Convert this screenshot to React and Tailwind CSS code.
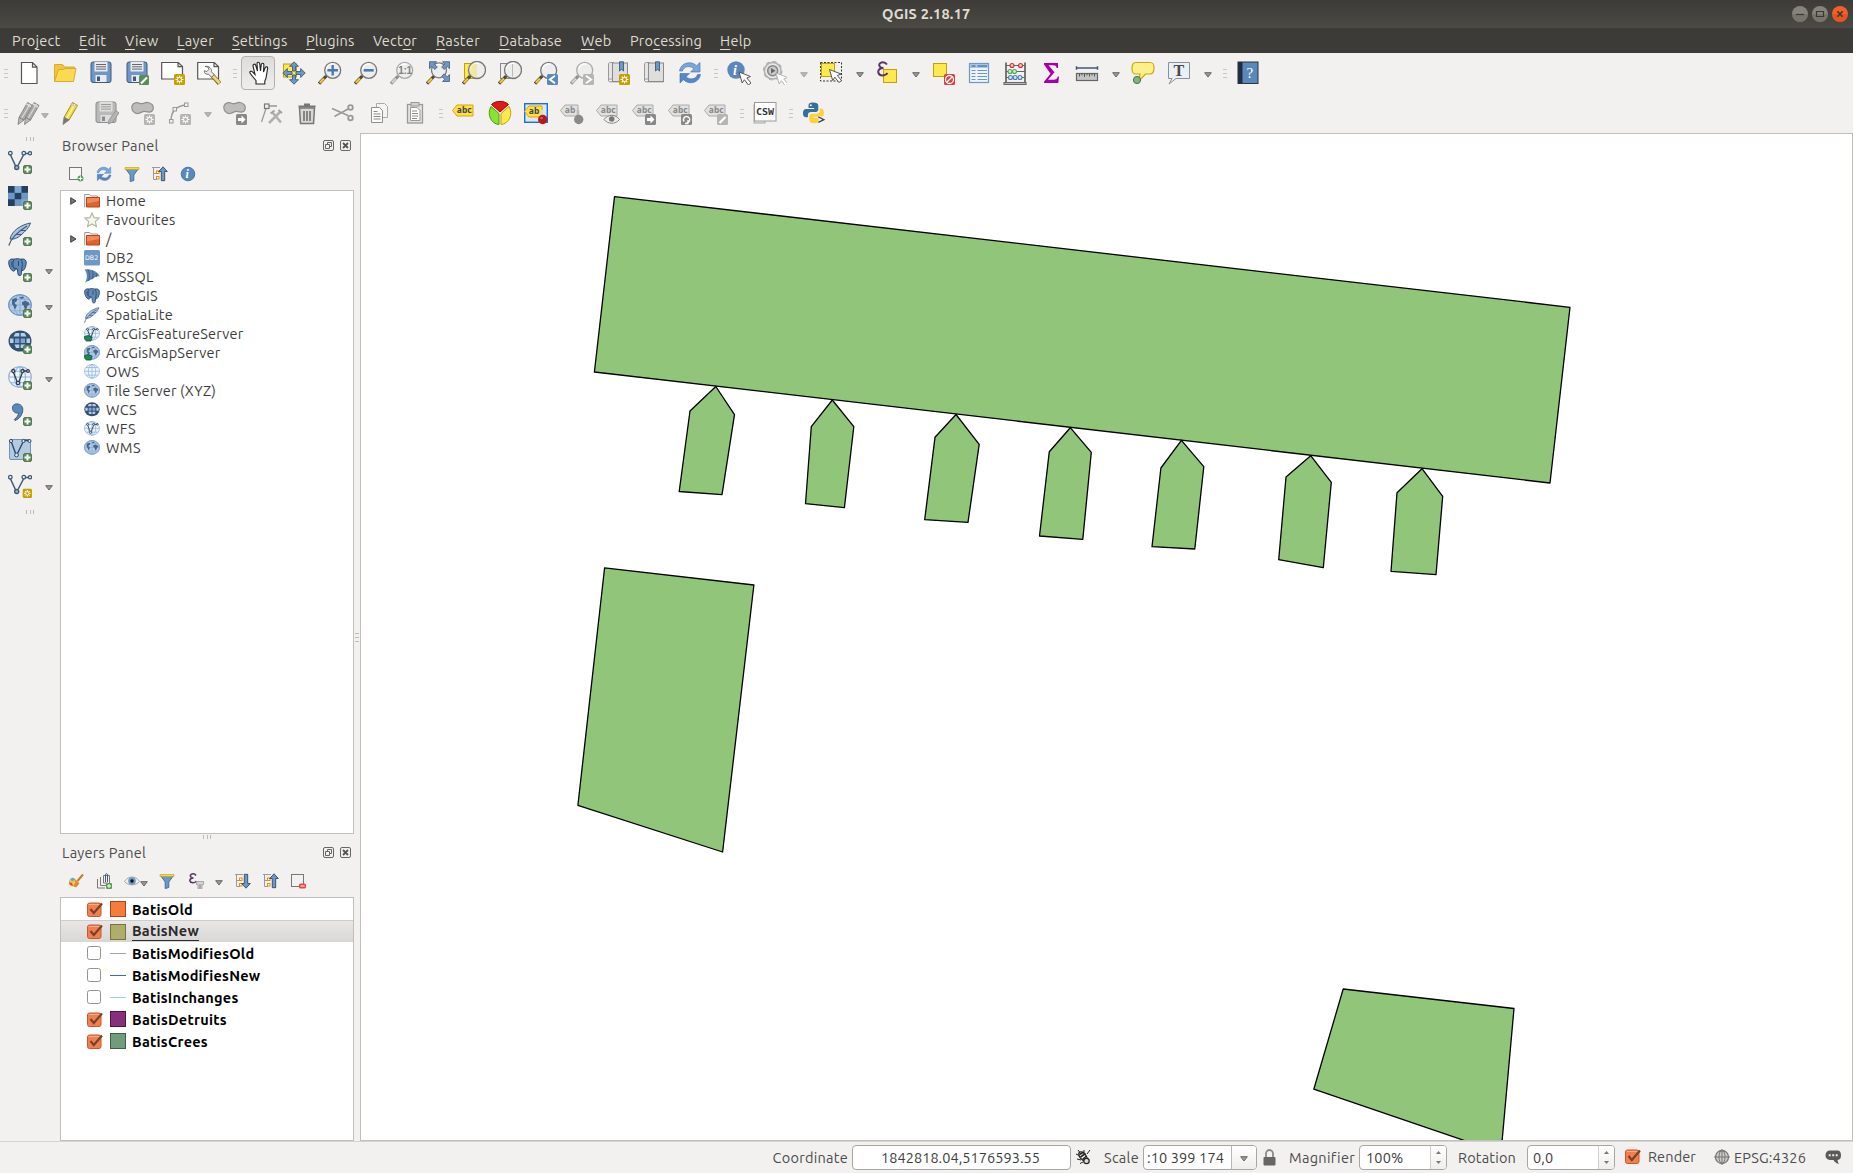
import { useLayoutEffect, useRef, useState } from "react";

/* Text whose letter spacing is adjusted so that it spans w pixels. */
function Fit({ w, className = "", children }) {
  const ref = useRef(null);
  const [ls, setLs] = useState(0);
  useLayoutEffect(() => {
    const el = ref.current;
    const n = el.textContent.length;
    setLs((w + 1 - el.getBoundingClientRect().width) / n);
  }, [w]);
  return (
    <span ref={ref} className={`inline-block whitespace-pre ${className}`} style={{ letterSpacing: `${ls}px` }}>
      {children}
    </span>
  );
}

const Svg = ({ children, s = 24, box = "0 0 24 24", className = "" }) => (
  <svg width={s} height={s} viewBox={box} fill="none" className={`block shrink-0 ${className}`}>
    {children}
  </svg>
);

/* ---------- shared pieces of icons ---------- */
const Plus = () => (
  <g>
    <rect x="15.5" y="15.5" width="8" height="8" rx="1.5" fill="#5a8c5a" stroke="#4e7d4e" />
    <path d="M19.500 16.500v6M16.500 19.500h6" stroke="#fff" strokeWidth="2" />
  </g>
);
const Star = ({ bg = "#c4a000" }) => (
  <g>
    <rect x="13" y="13" width="11" height="11" rx="1.5" fill={bg} />
    <path d="M18.5 14.5v8M14.5 18.5h8M15.7 15.7l5.6 5.6M21.3 15.7l-5.6 5.6" stroke="#fff" strokeWidth="1.1" />
    <circle cx="18.5" cy="18.5" r="2" fill={bg} stroke="#fff" strokeWidth=".9" />
  </g>
);
const Cursor = ({ x = 10, y = 10, soft }) => (
  <path
    transform={`translate(${x} ${y})`}
    d="M0 0l3.2 11 2.2-3.3 4 5.3 2.6-2-4.2-5 3.7-1.5z"
    fill="#fff"
    stroke={soft ? "#b5b5b5" : "#555"}
    strokeWidth="1"
  />
);
const Lens = ({ cx = 14.7, cy = 9.3, r = 8, gray, children }) => (
  <g>
    <path d={`M${cx - r * 0.7} ${cy + r * 0.7}L7 16.5`} stroke={gray ? "#999" : "#333"} strokeWidth="1.5" />
    <path d="M8.2 15L1 22.6" stroke={gray ? "#8d8d8d" : "#4a4a40"} strokeWidth="3.2" />
    <path d="M6 17.4L1.8 21.8" stroke={gray ? "#d2d2d2" : "#fcc52c"} strokeWidth="2.2" />
    <circle cx={cx} cy={cy} r={r} fill="#ececea" fillOpacity=".9" stroke={gray ? "#aaa" : "#777"} strokeWidth="1.3" />
    <path d={`M${cx - r + 2} ${cy - 1}a${r - 2} ${r - 2} 0 0 1 ${r} -${r - 3}`} stroke="#fff" strokeWidth="1.2" />
    {children}
  </g>
);
const Vee = () => (
  <g stroke="#3f5a78">
    <path d="M2.5 5l5.8 12.5M10 15.5L15.5 5M16 3.5h6" strokeWidth="1.5" />
    <circle cx="2.3" cy="3.2" r="1.8" fill="#f2f1f0" strokeWidth="1.3" />
    <circle cx="15.8" cy="3.2" r="1.8" fill="#f2f1f0" strokeWidth="1.3" />
    <circle cx="22" cy="3.2" r="1.6" fill="#f2f1f0" strokeWidth="1.3" />
    <circle cx="8.7" cy="17.5" r="2" fill="#9db8d6" strokeWidth="1.4" />
  </g>
);
const GlobeBase = ({ fill = "#c9dcf0", line = "#6d97c4" }) => (
  <g stroke={line} strokeWidth="1.1">
    <ellipse cx="12" cy="11" rx="11.3" ry="10.3" fill={fill} />
    <ellipse cx="12" cy="11" rx="5.5" ry="10.3" />
    <path d="M12 1v20M1 11h22M3 5.3h18M3 16.7h18" />
  </g>
);
const Land = () => (
  <path
    d="M4 5.500l3.500-1.500 2 1-1 2.500-2 1 .5 1.500 2 1.200-1 2.600-1.500 1.700-1-3.500-1.500-2zM11 3.500l4-1 1 1.500-2.500 1zM14 8l3.500-1.200L21 8.500l.5 2.500-2 .5-.8 3-1.700 1-1.300-4-1.700-1z"
    fill="#48668c"
  />
);
const Globe = () => (
  <g>
    <GlobeBase fill="#b4cbe6" line="#8eaed3" />
    <Land />
    <ellipse cx="12" cy="11" rx="11.3" ry="10.3" stroke="#6f93c0" />
  </g>
);
const WcsGlobe = () => (
  <g>
    <ellipse cx="12" cy="11" rx="11.5" ry="10.5" fill="#34506f" />
    <path d="M7.500 3h3.800v3.500H5.500zM12.700 3h3.800l2 3.500h-5.800zM2 8.500h3.500v4.500H2zM18.500 8.500H22v4.500h-3.500zM6.500 14.500h4.800v3.500H8zM12.700 14.500h4.800l-1.500 3.500h-3.300z" fill="#b4d0ee" />
    <path d="M7 8.500h4.300v4.500H7zM12.700 8.500H17v4.500h-4.300z" fill="#7ba5d4" />
  </g>
);
const WfsGlobe = () => (
  <g>
    <GlobeBase fill="#eef4fb" line="#8fb2da" />
    <g stroke="#2d3b4c" strokeWidth="1.3">
      <path d="M5.500 6.500l4 10M10.800 16l4-10.500M15 5h5" />
      <circle cx="5.300" cy="5" r="1.500" fill="#fff" />
      <circle cx="14.500" cy="5" r="1.500" fill="#fff" />
      <circle cx="20" cy="5" r="1.300" fill="#fff" />
      <circle cx="10" cy="17" r="1.600" fill="#fff" />
    </g>
  </g>
);
const Elephant = () => (
  <g stroke="#2f4a69" strokeWidth="1">
    <path d="M.700 4.500C.7 1.500 3 .5 6 1.200 8 .5 11 .5 12.800 1.300 16 .3 18.500 2 18.200 5c-.2 3-1.200 6-3 7.500h-1.700c0 2.500.2 4.500-1.200 5-2 .5-2.300-.8-2.600-3l-.4-3.500H7.500c-.5 1.500-1.200 2.500-2.500 2C2.500 12 .7 7.500.7 4.500z" fill="#6089bb" />
    <path d="M6 1.500c-1.600 3-1.400 6.500.2 9.500M13 1.500c1.800 3 1.700 6 .5 11M9 11c-.8-1-2.500-1-3-.2M4 3.500c-.5 2.500-.3 4 .3 5.500M10.500 3v5" />
  </g>
);
const Feather = () => (
  <g>
    <path d="M22.500 1C14 2.500 4 8 2 17c3 .5 7.500-.5 11-4 4-3.500 8-7 9.500-12z" fill="#a9c5e3" stroke="#3f5a78" />
    <path d="M19 4C11 9 3.500 14.500.8 23.500M8 12.500h5M12 8.500h6" stroke="#3f5a78" strokeWidth="1.2" />
  </g>
);
const Floppy = ({ gray }) => (
  <g>
    <rect x="2" y="1" width="20" height="20.500" rx="2" fill={gray ? "#b9b9b9" : "#6d97c4"} stroke={gray ? "#8c8c8c" : "#3f5a78"} />
    <rect x="5.500" y="1" width="13" height="9.500" fill={gray ? "#dedede" : "#e8ecf2"} />
    <path d="M7 3.500h10M7 5.800h10M7 8.100h10" stroke={gray ? "#999" : "#666"} strokeWidth="1" />
    <rect x="6.500" y="14" width="11" height="7" fill={gray ? "#dedede" : "#e8ecf2"} />
    <rect x="8" y="15.500" width="3" height="4.500" fill={gray ? "#8c8c8c" : "#3f5a78"} />
  </g>
);
const Page = () => <path d="M.7 1.500h16.500l4.300 4v12.500H.7zM17 1.500v4.200h4.500" fill="#fff" stroke="#555" strokeWidth="1.200" />;
const Refresh = () => (
  <g stroke="#3a6fae" strokeWidth=".6">
    <path d="M1.500 10C2.500 4 8 .8 13.500 2c2 .4 3.700 1.500 5 2.700L22 1.500V11h-9.500l3.500-3.200C12 4.300 6 5 4.500 10z" fill="#7aa6da" />
    <path d="M22.500 13.500c-1 6-6.500 9.200-12 8-2-.4-3.700-1.500-5-2.700L2 22v-9.500h9.500L8 15.700c4 3.500 10 2.800 11.500-2.200z" fill="#5588c6" />
  </g>
);
const Arrow = ({ soft }) => (
  <svg width="8" height="6" viewBox="0 0 8 6" className="block shrink-0">
    <path d="M.7.700h6.600L4 5z" fill={soft ? "#b5b5b5" : "#999"} stroke={soft ? "#a5a5a5" : "#666"} strokeWidth="1" />
  </svg>
);
const Book = () => (
  <g>
    <path d="M2.500 3c0-1 .8-1.500 2-1.500h3V18h-3c-1 0-2 .6-2 1.500z" fill="#e4e4e4" stroke="#999" />
    <rect x="6.500" y="2" width="15" height="18.500" fill="#dedede" stroke="#8a8a8a" />
    <path d="M2.500 19.500c0 .8.700 1.300 2 1.300h17" stroke="#888" />
    <path d="M13.500.8h4v9.400l-2-2.200-2 2.200z" fill="#6d97c4" stroke="#3f5a78" strokeWidth=".9" />
  </g>
);
const Blob = () => (
  <path d="M1 5c1-3.500 5-4 8-2.500 3 1 5-1.500 8-1 4 .7 6 3.500 5 7-1 3-4 3-7 2.200C12 9.500 10 12 7 12.500 3 13 .2 9 1 5z" fill="#bdbdbd" stroke="#8f8f8f" strokeWidth="1.200" />
);
const Tag = ({ on, label = "abc", w = 20, y = 4 }) => (
  <g>
    <path d={`M.500 ${y + 5.500}L5 ${y}h${w - 4}v11H5z`} fill={on ? "#fce04a" : "#e0e0e0"} stroke={on ? "#d8a800" : "#aaa"} />
    <text x="4.800" y={y + 8} fontSize="8.500" fontWeight="700" fontFamily="Noto Sans, sans-serif" fill={on ? "#444" : "#888"}>
      {label}
    </text>
  </g>
);
const Pencil = ({ x = 0, gray }) => (
  <g transform={`translate(${x} 0)`}>
    <path d="M4 16.500L12.500 1.500l5 3L9 19z" fill={gray ? "#a9a9a9" : "#f3dc4a"} stroke={gray ? "#8a8a8a" : "#a58a1a"} />
    <path d="M6.500 17.500L15 3" stroke={gray ? "#d8d8d8" : "#fdf5a5"} strokeWidth="1.200" />
    <path d="M4 16.500L3 23.500 9 19z" fill={gray ? "#bbb" : "#777"} stroke="#777" strokeWidth=".8" />
    <path d="M11.500 3l5 3" stroke={gray ? "#ddd" : "#ccc"} strokeWidth="1.500" />
  </g>
);
const GrayStar = () => <Star bg="#b4b4b4" />;
const BadgeBox = ({ c = "#8a8a8a", d }) => (
  <g>
    <rect x="13" y="13" width="11" height="11" rx="1.500" fill={c} />
    <path d={d} stroke="#fff" strokeWidth="2" />
  </g>
);

/* ---------- top toolbar icons ---------- */
const I = {
  newFile: <path d="M4.500 1.500h11l4.500 4.500v16.500H4.500zM15.500 1.500v4.700H20" fill="#fff" stroke="#555" strokeWidth="1.200" />,
  open: (
    <g stroke="#d4ac30">
      <path d="M1.500 20V3.500h8l2 2.500h10v4" fill="#f0c63a" />
      <path d="M1.500 20.500L5.500 8.500h5l1.500-1H23l-2.500 13z" fill="#fcd955" />
    </g>
  ),
  save: <Floppy />,
  saveAs: (
    <g>
      <Floppy />
      <rect x="14" y="14" width="10" height="10" rx="1.500" fill="#5a8c5a" />
      <path d="M16 22.500l6-6" stroke="#fff" strokeWidth="2.200" />
    </g>
  ),
  composer: (
    <g>
      <Page />
      <Star />
    </g>
  ),
  manager: (
    <g>
      <Page />
      <path d="M15 14l7.500 8.500" stroke="#8a6d1c" strokeWidth="4.600" />
      <path d="M15.500 14.500l7 7.500" stroke="#ecd58a" strokeWidth="2.800" />
      <path d="M8 5.500l3 .5.800 2.500-2 2-2.600-.7c0 2.500 2 4 4.300 3.400l3 3 2.700-2.500-2.800-3c.9-3-2.400-6.200-6.400-5.200z" fill="#e8e8e8" stroke="#666" strokeWidth=".9" />
    </g>
  ),
  hand: (
    <path
      transform="translate(1 0)"
      d="M9 23v-3.500C7 17 4.500 14.500 3 12c-.8-1.500 1.300-2.500 2.500-1L8 13.500 6 5c-.4-2 2-2.600 2.600-.8L10.500 10 10 2.800c-.1-2 2.400-2.200 2.700-.2L13.500 10l.8-6.500c.3-1.800 2.700-1.500 2.600.3L16.500 11l1.700-4.200c.8-1.700 2.800-1 2.400.8-.6 3-1 6-1.400 8.400-.3 2-.9 3-1.400 4V23z"
      fill="#fff"
      stroke="#222"
      strokeWidth="1.100"
    />
  ),
  pan: (
    <g>
      <rect x="1.500" y="3" width="13" height="13" fill="#fce94f" stroke="#c4a000" />
      <path d="M12 .8l4.500 4.500h-3v4.700h-3V5.300h-3zM12 23.200l4.500-4.500h-3V14h-3v4.700h-3zM.8 12l4.500-4.500v3H10v3H5.300v3zM23.200 12l-4.500-4.500v3H14v3h4.700v3z" fill="#6d97c4" stroke="#3f5a78" strokeWidth=".9" />
    </g>
  ),
  zoomIn: (
    <Lens>
      <path d="M14.700 4v10.600M9.400 9.300H20" stroke="#4a78b0" strokeWidth="2.400" />
    </Lens>
  ),
  zoomOut: (
    <Lens>
      <path d="M9.700 9.300h10" stroke="#4a78b0" strokeWidth="2.600" />
    </Lens>
  ),
  zoomNative: (
    <Lens gray>
      <text x="8.300" y="12.800" fontSize="10" fontWeight="700" fontFamily="Liberation Sans, sans-serif" fill="#808080" letterSpacing="-.3">
        1:1
      </text>
    </Lens>
  ),
  zoomFull: (
    <g>
      <Lens cx={13} r={7.5} />
      <path d="M3.500.7h7L8.300 3l3 3-2.500 2.500-3-3L3.500 7.700zM23.500.7h-7L18.700 3l-3 3 2.500 2.500 3-3 2.300 2.200zM23.500 20.500h-7l2.200-2.200-3-3 2.500-2.500 3 3 2.300-2.200z" fill="#6d97c4" stroke="#3f5a78" strokeWidth=".8" />
    </g>
  ),
  zoomSel: (
    <g>
      <rect x="2.500" y="2.500" width="12" height="15" fill="#fce94f" stroke="#c4a000" />
      <Lens cx={15} cy={9} r={8.500}>
        <path d="M8.500 5v8l3 3h3V2.500h-3z" fill="#f3e37c" fillOpacity=".6" />
      </Lens>
    </g>
  ),
  zoomLayer: (
    <g>
      <rect x="2.500" y="2.500" width="12" height="15" fill="#eee" stroke="#888" />
      <Lens cx={15} cy={9} r={8.500}>
        <path d="M14.500 3v12.500" stroke="#bbb" />
      </Lens>
    </g>
  ),
  zoomLast: (
    <g>
      <Lens />
      <BadgeBox c="#5b88bb" d="M21 14.800l-5 3.700 5 3.700" />
    </g>
  ),
  zoomNext: (
    <g>
      <Lens gray />
      <BadgeBox c="#b5b5b5" d="M16 14.800l5 3.700-5 3.700" />
    </g>
  ),
  newBookmark: (
    <g>
      <Book />
      <Star />
    </g>
  ),
  bookmarks: <Book />,
  refresh: <Refresh />,
  identify: (
    <g>
      <circle cx="9" cy="9" r="8.700" fill="#5b88bb" />
      <text x="6" y="14" fontSize="14" fontStyle="italic" fontWeight="700" fontFamily="Liberation Serif, serif" fill="#fff">
        i
      </text>
      <Cursor x={12} y={11} />
    </g>
  ),
  action: (
    <g>
      <circle cx="9.700" cy="9.700" r="8.300" fill="#e8e8e8" stroke="#b0b0b0" strokeWidth="1.600" />
      <circle cx="9.700" cy="9.700" r="9.200" stroke="#b0b0b0" strokeWidth="1.200" strokeDasharray="3.600 3.600" />
      <circle cx="9.700" cy="9.700" r="5" fill="#c9c9c9" stroke="#888" strokeWidth="1.600" />
      <path d="M8 7v5.400l4.500-2.700z" fill="#666" />
      <Cursor x={13} y={12} soft />
    </g>
  ),
  select: (
    <g>
      <rect x="1.500" y="1.500" width="21" height="18.500" stroke="#333" strokeDasharray="2 1.500" />
      <rect x="2.500" y="2.500" width="13" height="13" fill="#fce94f" stroke="#c4a000" />
      <Cursor x={10.500} y={8.500} />
    </g>
  ),
  expr: (
    <g>
      <rect x="8.500" y="8.500" width="13" height="13" fill="#fce94f" stroke="#c4a000" />
      <path d="M12 3.500C9-.5 3 1.500 4.500 5c.6 1.500 2.500 2 4 2-3 0-5.700 1.500-5.200 4.500.7 4 7.200 3.500 9.200.5" stroke="#5c3566" strokeWidth="2" />
    </g>
  ),
  deselect: (
    <g>
      <rect x="2.500" y="2.500" width="13" height="13" fill="#fce94f" stroke="#c4a000" />
      <rect x="13" y="13" width="11" height="11" rx="1.500" fill="#e23c3c" />
      <circle cx="18.500" cy="18.500" r="4" stroke="#fff" strokeWidth="1.300" />
      <path d="M15.700 21.300l5.600-5.600" stroke="#fff" strokeWidth="1.300" />
    </g>
  ),
  table: (
    <g>
      <rect x="2.500" y="2.500" width="19" height="19" fill="#eef4fb" stroke="#6d97c4" strokeWidth="1.200" />
      <rect x="3" y="3" width="18" height="4" fill="#a9c6e6" />
      <path d="M4.500 5h4M10.500 5H20" stroke="#4f7fb5" strokeWidth="1.500" />
      <path d="M4.500 9.500h4M4.500 12.500h4M4.500 15.500h4M4.500 18.500h4M10.500 9.500H20M10.500 12.500H20M10.500 15.500H20M10.500 18.500H20" stroke="#6d97c4" strokeWidth="1.200" />
    </g>
  ),
  abacus: (
    <g strokeWidth="1.100">
      <path d="M3 1.500v20M22 1.500v20" stroke="#444" strokeWidth="1.400" />
      <path d="M3 4.500h19M3 10.500h19M3 16.500h19" stroke="#666" />
      <path d="M1 21.500h22v2H1z" fill="#bbb" stroke="#666" />
      <g fill="#f6c2c2" stroke="#c33">
        <circle cx="9" cy="4.500" r="2" />
        <circle cx="17.500" cy="4.500" r="2" />
      </g>
      <g fill="#c9f0c9" stroke="#4fa84f">
        <circle cx="7" cy="10.500" r="2" />
        <circle cx="11.500" cy="10.500" r="2" />
      </g>
      <g fill="#d5e6f7" stroke="#4a7db5">
        <circle cx="7.500" cy="16.500" r="2" />
        <circle cx="12.200" cy="16.500" r="2" />
        <circle cx="17" cy="16.500" r="2" />
      </g>
    </g>
  ),
  sigma: <path d="M5 2h14v5h-1.300c-.4-2-1.400-2.700-3.700-2.700H9.500l6 7L9 18.800h5.500c2.500 0 3.700-1 4.300-3.300H20L19.300 22H5v-1.300l6.500-8L5 3.600z" fill="#a800a8" />,
  ruler: (
    <g>
      <path d="M1.500 7h21M1.500 5.300v3.400M22.500 5.300v3.400" stroke="#3f5a78" strokeWidth="1.500" />
      <rect x="1.500" y="12.500" width="21" height="7" fill="#c4c4c4" stroke="#666" strokeWidth="1.200" />
      <path d="M4.500 12.500v3M7 12.500v2M9.500 12.500v3.500M12 12.500v2M14.500 12.500v3M17 12.500v2M19.500 12.500v3" stroke="#555" />
    </g>
  ),
  tip: (
    <g>
      <path d="M5 1.500h14c3.500 0 4 2 4 5.500s-1 6-4 6h-4.500L8 20l1-7H5c-3 0-4-1.500-4-5.500s1-6 4-6z" fill="#fbf08c" stroke="#c9a90a" strokeWidth="1.200" />
      <circle cx="6" cy="19" r="3.600" fill="#7fb37f" stroke="#4d6f4d" />
    </g>
  ),
  textNote: (
    <g>
      <path d="M1.500 1.500h21v16H9L2 23l3-5.500H1.500z" fill="#e9f0f6" stroke="#8a9299" />
      <text x="6.500" y="14.500" fontSize="16" fontWeight="700" fontFamily="Liberation Serif, serif" fill="#484848">
        T
      </text>
    </g>
  ),
  help: (
    <g>
      <rect x="2" y="1" width="20" height="21.500" fill="#5b88bb" stroke="#333" />
      <rect x="2" y="1" width="4.500" height="21.500" fill="#1f2f42" />
      <text x="10.500" y="16.500" fontSize="15" fontFamily="Liberation Serif, serif" fill="#fff">
        ?
      </text>
    </g>
  ),
  pencils: (
    <g>
      <Pencil x={-2} gray />
      <Pencil x={4.500} gray />
    </g>
  ),
  pencil: <Pencil x={1} />,
  saveEdits: (
    <g>
      <g transform="translate(-1 0)">
        <Floppy gray />
      </g>
      <path d="M14 19l7-9.500 3 2.500-6.500 9-4 2z" fill="#b5b5b5" stroke="#999" />
    </g>
  ),
  addFeature: (
    <g>
      <Blob />
      <GrayStar />
    </g>
  ),
  curve: (
    <g>
      <path d="M4 20C4 10 9 5 19 4" stroke="#999" strokeWidth="1.400" />
      <g fill="#f2f1f0" stroke="#999">
        <rect x="2.500" y="18.500" width="3.500" height="3.500" />
        <rect x="6" y="6.500" width="3.500" height="3.500" />
        <rect x="17.500" y="2" width="3.500" height="3.500" />
      </g>
      <GrayStar />
    </g>
  ),
  moveFeature: (
    <g>
      <Blob />
      <rect x="13" y="13" width="11" height="11" rx="1.500" fill="#888" />
      <path d="M15 17h3.500v-2.500l4 4-4 4V20H15z" fill="#fff" />
    </g>
  ),
  node: (
    <g>
      <path d="M2.500 21L7.500 6M9 5h9" stroke="#999" strokeWidth="1.300" />
      <rect x="5.500" y="3" width="4.500" height="4.500" fill="#eee" stroke="#777" strokeWidth="1.200" />
      <path d="M10 22l11.500-11.500M13 11l9 10.500" stroke="#b0b0b0" strokeWidth="2.600" />
      <path d="M11.500 12.500l4-3M19.500 9l3.500 3" stroke="#a0a0a0" strokeWidth="1.700" />
    </g>
  ),
  trash: (
    <g stroke="#777">
      <path d="M4.500 7h15l-1 15.500h-13z" fill="#d8d8d8" strokeWidth="1.500" />
      <path d="M9 10v10M12 10v10M15 10v10" strokeWidth="1.700" />
      <path d="M3.500 5.500h17M9 3.500h6" strokeWidth="2.200" />
    </g>
  ),
  cut: (
    <g stroke="#999" strokeWidth="1.500">
      <path d="M1 7.500l16 7M3.500 15.500L17 8" />
      <circle cx="19.500" cy="6.500" r="2.300" strokeWidth="1.800" />
      <circle cx="19.500" cy="17" r="2.300" strokeWidth="1.800" />
    </g>
  ),
  copy: (
    <g stroke="#aaa">
      <path d="M9.500 2.500h8l3 3v11h-11z" fill="#f4f4f4" />
      <path d="M4.500 6.500h8l3 3v12h-11z" fill="#fcfcfc" stroke="#8f8f8f" />
      <path d="M6.500 10.500h4M6.500 13h7M6.500 15.500h7M6.500 18h7" stroke="#888" />
    </g>
  ),
  paste: (
    <g stroke="#999">
      <rect x="4.500" y="3.500" width="15" height="18.500" fill="#e2e2e2" strokeWidth="1.300" />
      <path d="M7.500 6.500h6.500l3 3V19.500H7.500z" fill="#fff" />
      <rect x="8" y="1.500" width="8" height="3.500" fill="#d0d0d0" />
      <path d="M9 10h5M9 12.500h6M9 15h6M9 17.500h5" stroke="#888" />
    </g>
  ),
  label: <Tag on />,
  pie: (
    <g strokeWidth="1">
      <path d="M12 11L3.500 3.500C8-.7 16-.7 20.500 3.500z" fill="#dd1c1a" stroke="#a00" />
      <path d="M11 12.500v11C3 23-1.500 13 3 5.500z" fill="#8ae234" stroke="#4e9a06" />
      <path d="M13 12.500v11C21 23 25.500 13 21 5.500z" fill="#fce94f" stroke="#c4a000" />
    </g>
  ),
  pin: (
    <g>
      <rect x=".7" y="2.700" width="22.600" height="18.600" fill="#dfe6ee" stroke="#1a6fd8" strokeWidth="1.400" />
      <Tag on label="ab" w={17} y={5} />
      <path d="M18 9v8" stroke="#ddd" strokeWidth="2.500" />
      <circle cx="18.700" cy="18.500" r="4.700" fill="#b01c20" />
      <circle cx="17.500" cy="17" r="1.200" fill="#e06060" />
    </g>
  ),
  pinGray: (
    <g>
      <Tag label="ab" w={17} />
      <path d="M18 9v6" stroke="#bbb" strokeWidth="2.500" />
      <circle cx="18.700" cy="18.500" r="4.700" fill="#8a8a8a" />
    </g>
  ),
  tagEye: (
    <g>
      <Tag />
      <path d="M8 18.500c4-5.500 11.500-5.500 15.500 0-4 5-11.500 5-15.500 0z" fill="#eee" stroke="#888" />
      <circle cx="15.700" cy="18" r="2.800" fill="#777" />
    </g>
  ),
  tagMove: (
    <g>
      <Tag />
      <rect x="13" y="13" width="11" height="11" rx="1.500" fill="#888" />
      <path d="M15 17h3.500v-2.500l4 4-4 4V20H15z" fill="#fff" />
    </g>
  ),
  tagRotate: (
    <g>
      <Tag />
      <rect x="13" y="13" width="11" height="11" rx="1.500" fill="#888" />
      <path d="M16 20.500c-1.500-3 .5-5 2.500-5s4 2 3 4.500c-.6 1.300-1.500 1.800-3 2M20 19v3.500h-3" stroke="#fff" strokeWidth="1.400" />
    </g>
  ),
  tagEdit: (
    <g>
      <Tag />
      <rect x="13" y="13" width="11" height="11" rx="1.500" fill="#b5b5b5" />
      <path d="M15.500 22l6-6" stroke="#fff" strokeWidth="2.200" />
    </g>
  ),
  csw: (
    <g>
      <rect x="1" y="4" width="11" height="18" fill="#e8e8e8" stroke="#aaa" />
      <rect x="1.500" y="1.500" width="21.500" height="18.500" fill="#fff" stroke="#999" />
      <text x="3" y="14" fontSize="9.500" fontWeight="600" fontFamily="DejaVu Sans Mono, monospace" fill="#333" textLength="18" lengthAdjust="spacingAndGlyphs">
        CSW
      </text>
    </g>
  ),
  python: (
    <g transform="translate(.5 .5) scale(.93)">
      <path d="M11.500 1C7.500 1 6.500 2.300 6.500 4.500V7h6v1H4C1.500 8 .5 10 .5 12.500S1.500 17 4 17h1.800v-2.500c0-2 1.500-3.300 3.400-3.300h5c1.800 0 2.800-1.300 2.800-3V4.500C17 2 15 1 11.500 1z" fill="#356f9f" />
      <circle cx="9" cy="4" r="1" fill="#fff" />
      <path d="M12.500 23.500c4 0 5-1.300 5-3.500v-2.500h-6v-1H20c2.500 0 3-2 3-4.500S22 7.500 20 7.500h-1.500V10c0 2-1.500 3.300-3.400 3.300h-5C8.300 13.300 7.300 14.600 7.300 16.300V20c0 2.500 1.700 3.500 5.200 3.500z" fill="#fcd23c" />
      <path d="M17 16.500l6 3-6 3" stroke="#fff" strokeWidth="3" />
      <path d="M17 16.500l6 3-6 3" stroke="#444" strokeWidth="1.500" />
    </g>
  ),
};

const Grip = () => (
  <div className="flex w-[13px] shrink-0 flex-col items-start gap-[3px] pl-[6px]">
    <div className="h-px w-1 bg-[#c9c7c4]" />
    <div className="h-px w-1 bg-[#c9c7c4]" />
    <div className="h-px w-1 bg-[#c9c7c4]" />
  </div>
);
const HGrip = () => (
  <div className="flex gap-[2.5px]">
    <div className="h-1 w-px bg-[#bdbbb8]" />
    <div className="h-1 w-px bg-[#bdbbb8]" />
    <div className="h-1 w-px bg-[#bdbbb8]" />
  </div>
);

const row1 = ["newFile", "open", "save", "saveAs", "composer", "manager", "|", "hand", "pan", "zoomIn", "zoomOut", "zoomNative", "zoomFull", "zoomSel", "zoomLayer", "zoomLast", "zoomNext", "newBookmark", "bookmarks", "refresh", "|", "identify", "action", "vs", "select", "v", "expr", "v", "deselect", "table", "abacus", "sigma", "ruler", "v", "tip", "textNote", "v", "|", "help"];
const row2 = ["pencils", "w", "pencil", "saveEdits", "addFeature", "curve", "vs", "moveFeature", "node", "trash", "cut", "copy", "paste", "|", "label", "pie", "pin", "pinGray", "tagEye", "tagMove", "tagRotate", "tagEdit", "|", "csw", "|", "python"];

function Toolbar({ items }) {
  return (
    <div className="flex h-10 items-center">
      <div className="w-[11px] shrink-0 -ml-[2px] mr-[2px]">
        <Grip />
      </div>
      {items.map((k, i) => {
        if (k === "|") return <Grip key={i} />;
        if (k === "v" || k === "vs")
          return (
            <div key={i} className="flex w-5 shrink-0 justify-center pl-px pt-[3px]">
              <Arrow soft={k === "vs"} />
            </div>
          );
        if (k === "w")
          return (
            <div key={i} className="-ml-[6px] w-3 shrink-0 pt-[6px]">
              <Arrow soft />
            </div>
          );
        if (k === "hand")
          return (
            <div key={i} className="mx-px flex h-[34px] w-[34px] shrink-0 items-center justify-center rounded border border-[#b4b1ac] bg-linear-to-b from-[#dddcda] to-[#efeeec]">
              <Svg>{I[k]}</Svg>
            </div>
          );
        return (
          <div key={i} className="flex w-9 shrink-0 justify-center">
            <Svg>{I[k]}</Svg>
          </div>
        );
      })}
    </div>
  );
}

const menus = [
  ["Pro", "j", "ect", 67, 47.5],
  ["", "E", "dit", 46, 26.5],
  ["", "V", "iew", 52, 32.5],
  ["", "L", "ayer", 55, 36],
  ["", "S", "ettings", 74, 54.5],
  ["", "P", "lugins", 67, 47.5],
  ["Vect", "o", "r", 63, 43],
  ["", "R", "aster", 63, 43],
  ["", "D", "atabase", 82, 62],
  ["", "W", "eb", 49, 29.5],
  ["Pro", "c", "essing", 90, 71],
  ["", "H", "elp", 60, 30.5],
];

const sideIcons = [
  [<><Vee /><Plus /></>, false],
  [
    <>
      <path d="M0 0h20v20H0z" fill="#6d97c4" />
      <path d="M0 0h6.700v6.700H0zM13.300 0H20v6.700h-6.700zM6.700 6.700h6.600v6.600H6.700zM0 13.300h6.700V20H0z" fill="#24405f" />
      <path d="M6.700 0h6.600v6.700H6.700zM13.300 13.300H20V20h-6.700z" fill="#7fa6d1" />
      <Plus />
    </>,
    false,
  ],
  [<><Feather /><Plus /></>, false],
  [<><Elephant /><Plus /></>, true],
  [<><Globe /><Plus /></>, true],
  [<><WcsGlobe /><Plus /></>, false],
  [<><WfsGlobe /><Plus /></>, true],
  [
    <>
      <path d="M4.500 6.500C4 3 7 1.500 10 2c4 .7 5.500 4 4.500 8-1 4-4 7.500-7.500 8.500l-.7-1C9 15.500 10.500 13 10.500 11 7 11.500 4.800 9.500 4.500 6.500z" fill="#5b88bb" stroke="#3f5a78" />
      <Plus />
    </>,
    false,
  ],
  [
    <>
      <rect x="1.500" y="1.500" width="21" height="20" rx="1.500" fill="#b3cae3" stroke="#7391b3" />
      <g stroke="#2f4a69">
        <path d="M3.500 4.500l4.500 12M9.500 15.500l5.500-11.500M16 2.500h5" strokeWidth="1.400" />
        <circle cx="3" cy="3" r="1.600" fill="#dfe9f4" />
        <circle cx="15.500" cy="3" r="1.600" fill="#dfe9f4" />
        <circle cx="21.500" cy="3" r="1.500" fill="#dfe9f4" />
        <circle cx="8.500" cy="17" r="1.900" fill="#dfe9f4" />
      </g>
      <Plus />
    </>,
    false,
  ],
  [
    <>
      <Vee />
      <g transform="translate(3.800 3.800) scale(.84)">
        <Star />
      </g>
    </>,
    true,
  ],
];

const Folder = () => (
  <g>
    <path d="M.7 14.500V1.500h5l1.500 1.500h6.300v3" fill="#fbfbfa" stroke="#999" />
    <path d="M2.500 4.500h13v9.500h-13z" fill="#e0622f" stroke="#b5431a" />
    <path d="M3 5h12v3L3 10.500z" fill="#f08a58" />
  </g>
);
const Arc = () => <path d="M.5 10.500l3.500-1 4 1.500-1 4H2.500C1 14.500.3 12.500.5 10.500z" fill="#1c8a4a" stroke="#0c4a5a" strokeWidth=".8" />;
const Small = ({ children }) => <g transform="scale(.667)">{children}</g>;

const tree = [
  ["Home", 39, <Folder />, true],
  ["Favourites", 68.5, <path d="M8 1l2.100 4.600 5 .5-3.700 3.400 1 5L8 12l-4.400 2.500 1-5L.9 6.100l5-.5z" fill="#f7f7f0" stroke="#b5b8a0" strokeWidth="1.200" />],
  ["/", 6, <Folder />, true],
  [
    "DB2", 27,
    <>
      <rect width="16" height="15.500" rx="1.500" fill="#6d97c4" />
      <text x="1" y="10" fontSize="6.300" fontFamily="DejaVu Sans, sans-serif" fill="#fff">DB2</text>
    </>,
  ],
  ["MSSQL", 46.5, <><path d="M.5.500C7-.2 13 2 16 7.500c-3-.6-5 .5-6.500 2L1 13.500c2.500-4 2.500-9-.5-13z" fill="#5d87b8" /><path d="M4 .800c2 4 2 8 0 11.200M8 1.500c1.500 2.500 1.500 6 0 8.500M12 4c.7 1.500.7 3 0 4" stroke="#3f5a78" /></>],
  ["PostGIS", 51, <g transform="scale(.85)"><Elephant /></g>],
  ["SpatiaLite", 66, <Small><Feather /></Small>],
  ["ArcGisFeatureServer", 136.5, <><Small><WfsGlobe /></Small><Arc /></>],
  ["ArcGisMapServer", 113.5, <><Small><Globe /></Small><Arc /></>],
  ["OWS", 32.5, <Small><GlobeBase fill="#eef4fb" line="#8fb2da" /></Small>],
  ["Tile Server (XYZ)", 109, <Small><Globe /></Small>],
  ["WCS", 30, <Small><WcsGlobe /></Small>],
  ["WFS", 29, <Small><WfsGlobe /></Small>],
  ["WMS", 34, <Small><Globe /></Small>],
];

const Funnel = () => (
  <g>
    <path d="M1.500 2.500h13L9.800 9v5.500l-3.600 1V9z" fill="#6d97c4" stroke="#4a6f99" />
    <path d="M1 1.500h14v2H1z" fill="#f3dc30" stroke="#b8a020" strokeWidth=".6" />
  </g>
);
const TreeArrow = ({ up }) => (
  <g>
    <path d="M1.500 1.500v12H5M1.500 7.500H4M0 1.500h8" stroke="#999" />
    <rect x="4.500" y="5" width="2.500" height="2.500" fill="#fff" stroke="#f08c00" />
    <rect x="4.500" y="10.500" width="2.500" height="2.500" fill="#fff" stroke="#f08c00" />
    {up ? (
      <path d="M11 .8l4.300 4.700h-2.600v9.200H9.300V5.500H6.700z" fill="#6d97c4" stroke="#2f4a69" strokeWidth=".9" />
    ) : (
      <path d="M11 15.200l4.300-4.700h-2.600V1.300H9.300v9.200H6.700z" fill="#6d97c4" stroke="#2f4a69" strokeWidth=".9" />
    )}
  </g>
);
const P = ({ children }) => <Svg s={16} box="0 0 16 16">{children}</Svg>;

const PanelTitle = ({ w, children }) => (
  <div className="flex h-6 items-center pl-[2px] pr-[3px] text-[#4c4c4c]">
    <Fit w={w}>{children}</Fit>
    <div className="ml-auto flex gap-[6px]">
      <Svg s={11} box="0 0 11 11">
        <rect x=".5" y=".5" width="10" height="10" rx="1.500" stroke="#666" />
        <path d="M4.500 4.500v-2h4v4h-2M2.500 4.500h4v4h-4z" stroke="#666" />
      </Svg>
      <Svg s={11} box="0 0 11 11">
        <rect x=".5" y=".5" width="10" height="10" rx="1.500" stroke="#666" />
        <path d="M3 3l5 5M8 3L3 8" stroke="#555" strokeWidth="1.800" />
      </Svg>
    </div>
  </div>
);

const Check = ({ on }) =>
  on ? (
    <Svg s={17} box="0 0 17 17">
      <rect x="1.500" y="2" width="13.500" height="13.500" rx="2" fill="#f07f52" stroke="#c8592a" />
      <path d="M2.500 3.500h11" stroke="#f9ab88" />
      <path d="M4.500 8l3.300 4L16 2.500" stroke="#7a4028" strokeWidth="2.100" />
    </Svg>
  ) : (
    <Svg s={17} box="0 0 17 17">
      <rect x="1.500" y="1.500" width="13" height="13" rx="2" fill="#fff" stroke="#97948f" />
    </Svg>
  );

const layers = [
  ["BatisOld", 60, true, "#f97b3c", "#a04a18"],
  ["BatisNew", 66, true, "#aeae6a", "#77733e"],
  ["BatisModifiesOld", 121, false, "#a898dc"],
  ["BatisModifiesNew", 127, false, "#3868c8"],
  ["BatisInchanges", 105.5, false, "#98d0e4"],
  ["BatisDetruits", 94, true, "#86307c", "#4a1646"],
  ["BatisCrees", 75, true, "#6f9c79", "#3c5f45"],
];

const polys = [
  "614.500,196.700 1570,307.300 1550,483 594.400,372",
  "715.800,386.500 734.500,414.700 722,494.700 679.200,491.500 690,411",
  "832.300,400 853.800,426.700 844.400,507.700 805.500,503.700 811.300,426.700",
  "956,414.500 979.200,444.300 968,522.300 924.700,519.700 935,437.300",
  "1070.300,427.700 1091.300,452.300 1082.800,539.300 1039.500,536 1049.300,451.700",
  "1181.400,440.300 1203.800,466.700 1194.800,549 1152,546.700 1160.900,468",
  "1310.700,455.700 1331.300,482.300 1323.300,567.700 1278.700,559.700 1286,477",
  "1422,468.700 1442.700,496.300 1436,574.700 1391,571.300 1397,492.700",
  "604.600,567.800 753.900,585 722.600,852 577.900,805.300",
  "1343.200,989 1514,1008.500 1501,1153 1313.800,1089.200",
];

const field = "flex h-[25px] shrink-0 items-center overflow-hidden rounded-[4px] border border-[#a9a6a1] bg-white text-[#3c3c3c]";
const Spin = () => (
  <div className="ml-auto flex h-full w-4 flex-col items-center justify-between border-l border-[#d0cecb] bg-linear-to-b from-white to-[#efeeec] py-[5px]">
    <svg width="5" height="3" viewBox="0 0 5 3"><path d="M0 3L2.500 0 5 3z" fill="#777" /></svg>
    <svg width="5" height="3" viewBox="0 0 5 3"><path d="M0 0l2.500 3L5 0z" fill="#777" /></svg>
  </div>
);

export default function App() {
  return (
    <div className="flex h-[1173px] w-[1853px] flex-col overflow-hidden bg-[#f2f1f0] font-['Ubuntu','Noto_Sans',sans-serif] text-[14.5px] leading-[19px]">
      <div className="flex h-7 shrink-0 items-center bg-linear-to-b from-[#3c3b37] to-[#4b4a44] pr-[5px] text-[#dfdbd2]">
        <div className="flex-1 pb-[2px] pl-[882px] font-bold"><Fit w={87.5}>QGIS 2.18.17</Fit></div>
        <div className="flex gap-[4px]">
          {["M4 8.500h8", "M4.500 5.500h7v5h-7z", "M5.300 5.300l5.400 5.400M10.700 5.300l-5.400 5.400"].map((d, i) => (
            <Svg key={i} s={16} box="0 0 16 16">
              <circle cx="8" cy="8" r="8" fill={i === 2 ? "#f0602c" : "#85837c"} />
              <path d="M0 8a8 8 0 0 0 16 0z" fill={i === 2 ? "#df4f1a" : "#6c6a64"} fillOpacity=".6" />
              <path d={d} stroke="#3a3934" strokeWidth={i === 2 ? 1.600 : 1.200} />
            </Svg>
          ))}
        </div>
      </div>

      <div className="flex h-[25px] shrink-0 items-center bg-[#3c3b37] pl-[12px] text-[#dfdbd2]">
        {menus.map(([a, u, b, cell, w], i) => (
          <div key={i} className="shrink-0" style={{ width: cell }}>
            <Fit w={w}>
              {a}
              <span className="underline decoration-1 underline-offset-[3px]">{u}</span>
              {b}
            </Fit>
          </div>
        ))}
      </div>

      <Toolbar items={row1} />
      <Toolbar items={row2} />

      <div className="flex h-[1008px] shrink-0">
        <div className="w-[60px] shrink-0">
          <div className="flex h-[11px] items-center pl-[26px]"><HGrip /></div>
          {sideIcons.map(([icon, more], i) => (
            <div key={i} className="flex h-9 items-center pl-2">
              <Svg>{icon}</Svg>
              {more && <div className="pl-[13px] pt-[3px]"><Arrow /></div>}
            </div>
          ))}
          <div className="flex h-4 items-center pl-[26px]"><HGrip /></div>
        </div>

        <div className="flex w-[294px] shrink-0 flex-col">
          <PanelTitle w={95.5}>Browser Panel</PanelTitle>
          <div className="flex h-[33px] items-center gap-3 pl-2 pt-px">
            <P>
              <rect x="1.500" y="1.500" width="12" height="12" fill="#f7f7f7" stroke="#777" />
              <circle cx="12.500" cy="12.500" r="3" fill="#5fa05f" />
              <path d="M12.500 10.500v4M10.500 12.500h4" stroke="#fff" />
            </P>
            <P><Small><Refresh /></Small></P>
            <P><Funnel /></P>
            <P><TreeArrow up /></P>
            <P>
              <circle cx="8" cy="8" r="6.800" fill="#5b88bb" stroke="#4a76a8" />
              <text x="5.600" y="12.300" fontSize="12" fontStyle="italic" fontWeight="700" fontFamily="Liberation Serif, serif" fill="#fff">i</text>
            </P>
          </div>
          <div className="h-[644px] shrink-0 border border-[#c1bfbc] bg-white">
            {tree.map(([name, w, icon, exp], i) => (
              <div key={i} className="flex h-[19px] items-center text-[#3c3c3c]">
                <div className="w-[23px] pl-[9px]">
                  {exp && (
                    <svg width="7" height="8" viewBox="0 0 7 8" className="block">
                      <path d="M.7.700L6 4 .7 7.300z" fill="#777" stroke="#333" strokeWidth=".9" />
                    </svg>
                  )}
                </div>
                <P>{icon}</P>
                <div className="pl-[6px]"><Fit w={w}>{name}</Fit></div>
              </div>
            ))}
          </div>
          <div className="flex h-[6px] items-center justify-center"><HGrip /></div>
          <PanelTitle w={83}>Layers Panel</PanelTitle>
          <div className="flex h-[33px] items-center pl-2 pt-px">
            <P>
              <path d="M1 7l5-2 5 4-4 5c-2 0-5-1-6-3z" fill="#f3c83c" />
              <path d="M2 6l3-1.500 2 2-3 2z" fill="#6aa0dc" />
              <path d="M1 9l3 1 1 3-3-1z" fill="#e04848" />
              <path d="M6 5.500l5.500 5L8 14.500c-1-.5-2-1-2.500-2l2-2.500z" fill="#d88a3c" />
              <path d="M9.500 8L15 1.500" stroke="#c47a2c" strokeWidth="2" />
            </P>
            <div className="pl-3">
              <P>
                <path d="M1.500 6v9H9M4.500 4v8.500H11M7.500 2.500h6V10M7.500 2.500V10h4" stroke="#777" />
                <path d="M9.500 9V1.500c0-1 2-1 2 0V9" stroke="#3f5a78" />
                <rect x="10" y="10" width="6" height="6" rx="1" fill="#5a9c5a" />
                <path d="M13 11v4M11 13h4" stroke="#fff" />
              </P>
            </div>
            <div className="flex w-[34.5px] shrink-0 items-end pl-[11.5px]">
              <P>
                <path d="M.5 8.500C4 2.500 12 2.500 15.500 8.500 12 13 4 13 .5 8.500z" fill="#eee" stroke="#aaa" />
                <circle cx="8" cy="8" r="3.800" fill="#6d97c4" />
                <circle cx="8" cy="8" r="1.700" fill="#111" />
              </P>
              <div className="pb-[2px]"><Arrow /></div>
            </div>
            <div className="pl-[12px]"><P><Funnel /></P></div>
            <div className="pl-[13px]">
              <P>
                <path d="M8 2.500C6-.5 1.500 1 2.500 3.500 3 4.800 4.500 5 5.500 5 3 5 1.500 6.500 2 8c.6 2.500 5.500 2 6.500 0" stroke="#5c3566" strokeWidth="1.600" />
                <path d="M8.500 8.500h7v3h-1.500v4h-1.500v-4h-1v4h-1.500v-4H8.500z" fill="#d4d4d4" stroke="#999" strokeWidth=".8" />
              </P>
            </div>
            <div className="pl-[11px] pt-[3px]"><Arrow /></div>
            <div className="pl-[12px]"><P><TreeArrow /></P></div>
            <div className="pl-[12px]"><P><TreeArrow up /></P></div>
            <div className="pl-[11px]">
              <P>
                <rect x="1.500" y="1.500" width="12" height="12" fill="#f2f1f0" stroke="#777" />
                <rect x="9" y="10.500" width="7" height="5" rx="1.500" fill="#e84848" />
                <path d="M10.500 13h4" stroke="#fff" />
              </P>
            </div>
          </div>
          <div className="h-[244px] shrink-0 border border-[#c1bfbc] bg-white">
            {layers.map(([name, w, on, fill, edge], i) => (
              <div
                key={i}
                className={`flex h-[22px] items-center pl-[25px] font-bold ${i === 1 ? "border-t border-[#cfcdca] bg-linear-to-b from-[#e8e7e6] to-[#d9d7d5] text-[#2b2b2b]" : "text-black"}`}
              >
                <Check on={on} />
                <div className="ml-[7px] flex w-[22px] items-center">
                  {edge ? (
                    <div className="h-4 w-4 border" style={{ backgroundColor: fill, borderColor: edge }} />
                  ) : (
                    <div className="h-px w-4" style={{ backgroundColor: fill }} />
                  )}
                </div>
                <Fit w={w} className={i === 1 ? "border-b border-[#2b2b2b] leading-[18px]" : ""}>{name}</Fit>
              </div>
            ))}
          </div>
        </div>

        <div className="flex w-[6px] shrink-0 flex-col items-center justify-center gap-[3px]">
          <div className="h-px w-1 bg-[#bdbbb8]" />
          <div className="h-px w-1 bg-[#bdbbb8]" />
          <div className="h-px w-1 bg-[#bdbbb8]" />
        </div>
        <div className="h-[1008px] flex-1 overflow-hidden border border-[#c1bfbc] bg-white">
          <svg width="1491" height="1006" viewBox="361 134 1491 1006" className="block">
            {polys.map((p, i) => (
              <polygon key={i} points={p} fill="#91c57a" stroke="#000" strokeWidth="1.300" strokeLinejoin="round" />
            ))}
          </svg>
        </div>
      </div>

      <div className="flex flex-1 items-center border-t border-[#d6d4d1] pb-px pl-[772px] text-[#4c4c4c]">
        <div className="w-[80px] shrink-0 pl-[.5px]"><Fit w={74.5}>Coordinate</Fit></div>
        <div className={`${field} w-[219px] justify-center pr-[2px]`}><Fit w={158}>1842818.04,5176593.55</Fit></div>
        <div className="w-[33px] shrink-0 pl-[4px]">
          <P>
            <path d="M3 1l3 4M1 5l4 2M9 1v4" stroke="#222" />
            <ellipse cx="8" cy="7.500" rx="3" ry="5.500" transform="rotate(-40 8 7.500)" fill="#fff" stroke="#222" strokeWidth="1.300" />
            <path d="M4.500 5.500l4-2.500M5.500 8l5-3.500M7.500 10.500l4-3.500" stroke="#222" strokeWidth="1.600" />
            <circle cx="11.500" cy="12" r="2.700" fill="#ddd" stroke="#222" strokeWidth="1.200" />
            <path d="M2 10l4 1M5 14.500l3-1.500M12 5l3-4" stroke="#222" />
          </P>
        </div>
        <div className="w-[39px] shrink-0"><Fit w={34}>Scale</Fit></div>
        <div className={`${field} w-[114px] pl-[3px]`}>
          <Fit w={76}>:10 399 174</Fit>
          <div className="ml-auto flex h-full w-[25px] items-center justify-center border-l border-[#bbb8b4] bg-linear-to-b from-white to-[#efeeec] pt-1"><Arrow /></div>
        </div>
        <div className="w-[32px] shrink-0 pl-[6px]">
          <svg width="13" height="17" viewBox="0 0 13 17" className="block" fill="none">
            <path d="M3 8V4.500a3.500 3.500 0 0 1 7 0V8" stroke="#8a8a8a" strokeWidth="1.800" />
            <rect x=".5" y="8" width="12" height="8.500" rx="1" fill="#666" />
          </svg>
        </div>
        <div className="w-[70px] shrink-0"><Fit w={64.5}>Magnifier</Fit></div>
        <div className={`${field} w-[88px] pl-[6px]`}><Fit w={36.5}>100%</Fit><Spin /></div>
        <div className="w-[80px] shrink-0 pl-[11px]"><Fit w={57}>Rotation</Fit></div>
        <div className={`${field} w-[88px] pl-[5px]`}><Fit w={19.5}>0,0</Fit><Spin /></div>
        <div className="w-[33px] shrink-0 pl-[9px] pb-[2px]"><Check on /></div>
        <div className="w-[66px] shrink-0 pb-[2px]"><Fit w={47}>Render</Fit></div>
        <div className="w-[20px] shrink-0 pb-px">
          <P>
            <circle cx="8" cy="8" r="6.500" fill="#ccc" stroke="#777" strokeWidth="1.300" />
            <ellipse cx="8" cy="8" rx="3" ry="6.500" stroke="#777" />
            <path d="M8 0v16M0 8h16" stroke="#777" />
          </P>
        </div>
        <div className="w-[91px] shrink-0"><Fit w={71}>EPSG:4326</Fit></div>
        <div className="pb-px">
          <P>
            <path d="M5 1.500h7c3 0 4 2 4 4.800S15 11 12.500 11c.3 2 .8 3 1.500 4-2.500-.5-4.500-2-5.500-4H5C2 11 .5 9 .5 6.300S2 1.500 5 1.500z" fill="#5a5a5a" />
            <path d="M3.700 5.300h2v2h-2zM7.200 5.300h2v2h-2zM10.700 5.300h2v2h-2z" fill="#eee" />
          </P>
        </div>
      </div>
    </div>
  );
}
